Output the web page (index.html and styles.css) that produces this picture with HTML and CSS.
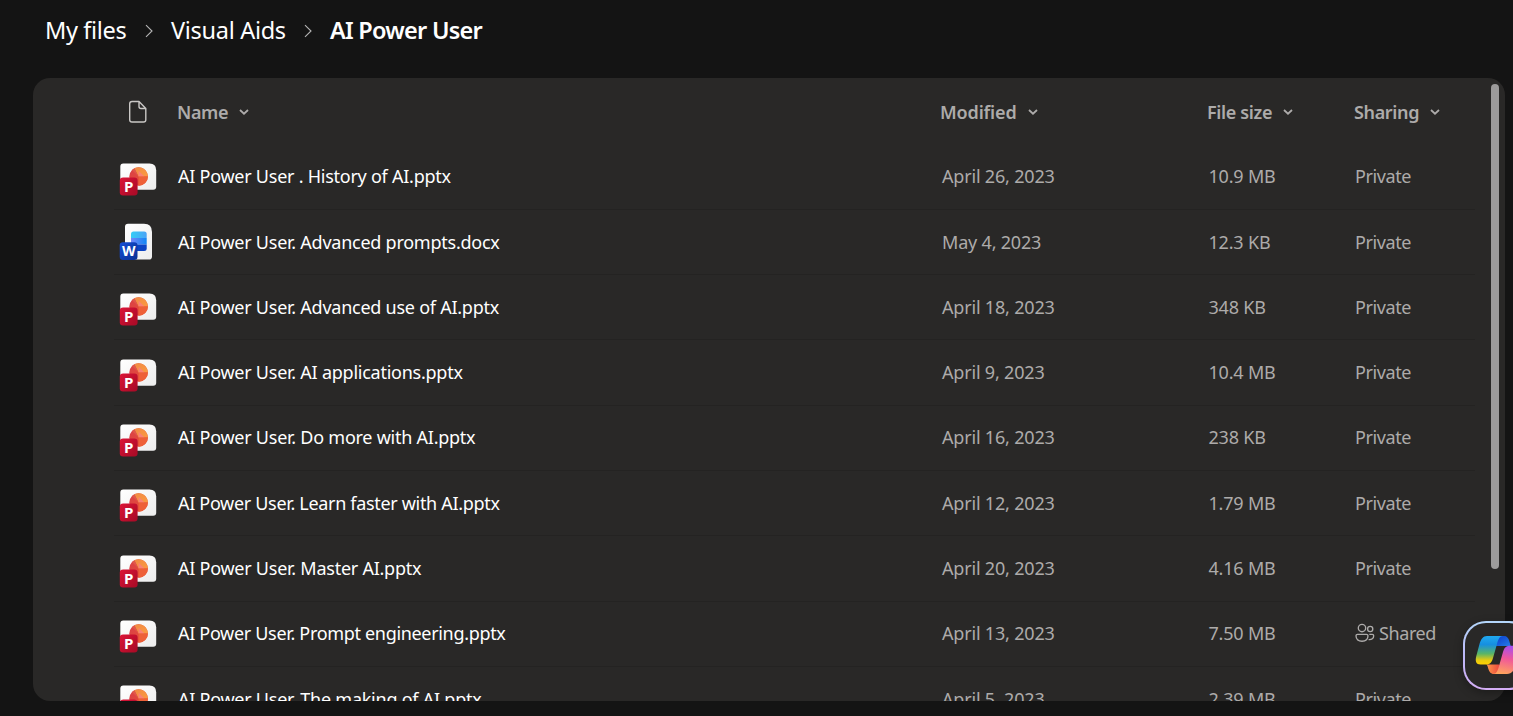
FILE: index.html
```html
<!DOCTYPE html>
<html lang="en">
<head>
<meta charset="utf-8">
<title>AI Power User</title>
<link rel="stylesheet" href="styles.css">
</head>
<body>
<svg class="defs" width="0" height="0" aria-hidden="true">
  <defs>
    <linearGradient id="paper" x1="0" y1="0" x2="1" y2="1"><stop offset="0" stop-color="#fff"/><stop offset="1" stop-color="#ededed"/></linearGradient>
    <linearGradient id="red" x1="0" y1="0" x2="1" y2="1"><stop offset="0" stop-color="#dc1437"/><stop offset="1" stop-color="#a50a25"/></linearGradient>
    <linearGradient id="pie" x1="0" y1="0" x2="1" y2="1"><stop offset="0" stop-color="#d9404a"/><stop offset="1" stop-color="#e8502f"/></linearGradient>
    <linearGradient id="pieTop" x1="0" y1="0" x2="1" y2="1"><stop offset="0" stop-color="#f08a45"/><stop offset="1" stop-color="#fb9a40"/></linearGradient>
    <linearGradient id="blue" x1="0" y1="0" x2="1" y2="1"><stop offset="0" stop-color="#1550d6"/><stop offset="1" stop-color="#0a2f93"/></linearGradient>
    <linearGradient id="w1"><stop offset="0" stop-color="#35cdf6"/><stop offset="1" stop-color="#4ba3f6"/></linearGradient>
    <linearGradient id="w2"><stop offset="0" stop-color="#7587f8"/><stop offset="1" stop-color="#0f86f5"/></linearGradient>
    <linearGradient id="cpA" x1="0" y1="0" x2="0" y2="1"><stop offset="0" stop-color="#20a9f0"/><stop offset=".3" stop-color="#168fe0"/><stop offset=".62" stop-color="#59b568"/><stop offset=".85" stop-color="#e8ca10"/><stop offset="1" stop-color="#ffd000"/></linearGradient>
    <linearGradient id="cpB" x1="0" y1="0" x2="1" y2="1"><stop offset="0" stop-color="#0b3ccd"/><stop offset="1" stop-color="#267de8"/></linearGradient>
    <linearGradient id="cpC" x1=".6" y1="0" x2=".4" y2="1"><stop offset="0" stop-color="#a64df0"/><stop offset=".45" stop-color="#f0579b"/><stop offset="1" stop-color="#ffa35d"/></linearGradient>
    <linearGradient id="cpD"><stop offset="0" stop-color="#ff9b4b"/><stop offset="1" stop-color="#e93f3c"/></linearGradient>
    <symbol id="ppt" viewBox="8 6.7 40 40">
      <path d="M13.3 13.2H39.5Q46.2 13.2 46.2 20V36.5Q46.2 39.5 43.2 39.5H13.3Q10.3 39.5 10.3 36.5V16.2Q10.3 13.2 13.3 13.2Z" fill="url(#paper)"/>
      <circle cx="28.6" cy="26.2" r="9.3" fill="url(#pie)"/>
      <path d="M28.6 26.2 24.2 18A9.3 9.3 0 0 1 37.9 26.2Z" fill="url(#pieTop)"/>
      <path d="M28.6 26.2 22 19.6A9.3 9.3 0 0 1 24.5 17.9Z" fill="#e0584a"/>
      <path d="M28.6 20.5 34.5 26.2H28.6Z" fill="#fa8177"/>
      <path d="M28.6 26.2H37.9A9.3 9.3 0 0 1 28.6 35.5Z" fill="#ee6038"/>
      <rect x="9.8" y="27.2" width="17.8" height="18" rx="3.3" fill="url(#red)"/>
      <text x="18.8" y="41.6" class="badge-letter">P</text>
    </symbol>
    <symbol id="doc" viewBox="8 7 40 40">
      <path d="M18 8.8H34Q42 8.8 42 17V41.5Q42 44.6 39 44.6H18Q15 44.6 15 41.5V11.8Q15 8.8 18 8.8Z" fill="url(#paper)"/>
      <path d="M23.5 16.5H34.2Q36.7 16.5 36.7 19V23H21V19Q21 16.5 23.5 16.5Z" fill="url(#w1)"/>
      <path d="M21 23H36.7V29.5H21Z" fill="url(#w2)"/>
      <path d="M21 29.5H36.7V33.5Q36.7 36 34 36H21Z" fill="#0b43c4"/>
      <rect x="9.7" y="27.2" width="17.8" height="17.8" rx="3.3" fill="url(#blue)"/>
      <text x="18.7" y="41.3" class="badge-letter wide">W</text>
    </symbol>
    <symbol id="down" viewBox="0 0 10 6"><path d="M1 1 5 4.7 9 1" fill="none" stroke="currentColor" stroke-width="1.8"/></symbol>
    <symbol id="next" viewBox="0 0 8 14"><path d="M1 1.2 7 7 1 12.8" fill="none" stroke="currentColor" stroke-width="1.1"/></symbol>
  </defs>
</svg>

<nav class="crumbs">
  <a class="c1">My files</a><svg class="next"><use href="#next"/></svg>
  <a class="c2">Visual Aids</a><svg class="next"><use href="#next"/></svg>
  <b class="c3">AI Power User</b>
</nav>

<main class="panel">
  <div class="row head">
    <svg class="file" viewBox="0 0 20 24"><path d="M4 1.5H11L17.8 8.5V19.7Q17.8 22 15.5 22H4Q1.7 22 1.7 19.7V3.8Q1.7 1.5 4 1.5ZM11 1.5V6.5Q11 8.5 13 8.5H17.8" fill="none" stroke="currentColor" stroke-width="1.4" stroke-linejoin="round"/></svg>
    <span>Name<svg class="down"><use href="#down"/></svg></span>
    <span class="modified">Modified<svg class="down"><use href="#down"/></svg></span>
    <span>File size<svg class="down"><use href="#down"/></svg></span>
    <span>Sharing<svg class="down"><use href="#down"/></svg></span>
  </div>
  <div class="row"><svg class="icon"><use href="#ppt"/></svg><span class="name">AI Power User . History of AI.pptx</span><span>April 26, 2023</span><span>10.9 MB</span><span class="access">Private</span></div>
  <div class="row"><svg class="icon"><use href="#doc"/></svg><span class="name">AI Power User. Advanced prompts.docx</span><span>May 4, 2023</span><span>12.3 KB</span><span class="access">Private</span></div>
  <div class="row"><svg class="icon"><use href="#ppt"/></svg><span class="name">AI Power User. Advanced use of AI.pptx</span><span>April 18, 2023</span><span>348 KB</span><span class="access">Private</span></div>
  <div class="row"><svg class="icon"><use href="#ppt"/></svg><span class="name">AI Power User. AI applications.pptx</span><span>April 9, 2023</span><span>10.4 MB</span><span class="access">Private</span></div>
  <div class="row"><svg class="icon"><use href="#ppt"/></svg><span class="name">AI Power User. Do more with AI.pptx</span><span>April 16, 2023</span><span>238 KB</span><span class="access">Private</span></div>
  <div class="row"><svg class="icon"><use href="#ppt"/></svg><span class="name tight">AI Power User. Learn faster with AI.pptx</span><span>April 12, 2023</span><span>1.79 MB</span><span class="access">Private</span></div>
  <div class="row"><svg class="icon"><use href="#ppt"/></svg><span class="name">AI Power User. Master AI.pptx</span><span>April 20, 2023</span><span>4.16 MB</span><span class="access">Private</span></div>
  <div class="row"><svg class="icon"><use href="#ppt"/></svg><span class="name tight">AI Power User. Prompt engineering.pptx</span><span>April 13, 2023</span><span>7.50 MB</span><span class="access shared"><svg class="people" viewBox="0 0 20 20"><g fill="none" stroke="currentColor" stroke-width="1.35"><circle cx="7" cy="5" r="3.7"/><circle cx="15.2" cy="6" r="2.6"/><path d="M2.5 11.3H11.5Q13 11.3 13 12.8C13 16.5 10.5 18.2 7 18.2S1 16.5 1 12.8Q1 11.3 2.5 11.3ZM14.3 11.3H17.2Q18.7 11.3 18.7 12.8C18.7 15.6 16.8 16.8 13.6 16.6"/></g></svg>Shared</span></div>
  <div class="row"><svg class="icon"><use href="#ppt"/></svg><span class="name">AI Power User. The making of AI.pptx</span><span>April 5, 2023</span><span>2.39 MB</span><span class="access">Private</span></div>
  <div class="scroll"></div>
</main>

<div class="copilot">
  <svg viewBox="0 0 44 40">
    <path d="M24 1H29C32 1 33.5 3 34.3 6L35.7 11H21V5Z" fill="url(#cpB)"/>
    <path d="M11 29.5H24L26 33 24 39H19C15.5 39 14.2 36.5 13.2 33.5 12.6 31 12 29.5 11 29.5Z" fill="url(#cpD)"/>
    <path d="M12 1H28C24.5 1 23.3 4.5 22 9L18 23C16.8 27 15.5 29.5 11 29.5H5.5C1 29.5 0 26 1.3 21L4.5 9C6 4 8 1 12 1Z" fill="url(#cpA)"/>
    <path d="M32 39H18C21.5 39 22.7 35.5 24 31L28 17C29.2 13 30.5 10.7 35 10.7H39.5C44 10.7 45 14 43.7 19L40.5 31C39 36 36 39 32 39Z" fill="url(#cpC)"/>
  </svg>
</div>
</body>
</html>
```
FILE: styles.css
```css
* { box-sizing: border-box; }
body {
  margin: 0;
  width: 1513px;
  height: 716px;
  overflow: hidden;
  position: relative;
  background: #141414;
  color: #fff;
  font-family: "Noto Sans", "Open Sans", sans-serif;
}
.defs { position: absolute; }
.crumbs {
  height: 78px;
  padding: 0 0 18px 45px;
  display: flex;
  align-items: center;
  font-size: 23.5px;
  white-space: nowrap;
}
.crumbs b { font-weight: 600; }
.c1 { width: 82px; letter-spacing: -0.35px; }
.c2 { width: 115px; letter-spacing: -0.3px; }
.c3 { letter-spacing: -0.75px; }
.next { width: 8px; height: 14px; margin: 1px 18px 0 18px; color: #b5b5b5; }
.panel {
  position: relative;
  width: 1472px;
  height: 623px;
  margin-left: 33px;
  padding: 0 30px 0 81px;
  border-radius: 17px;
  background: #292827;
  overflow: hidden;
}
.row {
  display: grid;
  grid-template-columns: 64px 764px 266.5px 146.5px 1fr;
  align-items: center;
  height: 65.3px;
  padding-bottom: 1px;
  border-bottom: 1px solid #242322;
  font-size: 18px;
  letter-spacing: -0.19px;
  color: #adabaa;
  white-space: nowrap;
}
.name { color: #fff; letter-spacing: -0.25px; }
.name.tight { letter-spacing: -0.32px; }
.access { letter-spacing: -0.4px; }
.head {
  height: 66.6px;
  border-bottom: 0;
  padding: 2px 0 0;
  font-weight: 600;
  letter-spacing: -0.35px;
  margin-left: -1px;
  grid-template-columns: 64px 763px 267px 147px 1fr;
}
.modified { letter-spacing: -0.15px; }
.file { width: 20px; height: 24px; margin-left: 15px; color: #c9c7c5; }
.down { width: 10px; height: 6px; margin-left: 11px; vertical-align: 4px; }
.icon { width: 40px; height: 40px; margin: 1px 0 0 4px; }
.badge-letter {
  font: 700 15px "Open Sans", "Noto Sans", sans-serif;
  letter-spacing: 0;
  text-anchor: middle;
  fill: #fff;
}
.badge-letter.wide { font-size: 14px; }
.shared { display: flex; align-items: center; gap: 4px; }
.people { width: 20px; height: 20px; }
.scroll {
  position: absolute;
  top: 6px;
  right: 6px;
  width: 8px;
  height: 485px;
  border-radius: 4px;
  background: #9c9b9b;
}
.copilot {
  position: absolute;
  left: 1463px;
  top: 621px;
  width: 69px;
  height: 69px;
  padding: 12px 10px;
  border: 2px solid transparent;
  border-radius: 23px;
  background: linear-gradient(#292827, #292827) padding-box, linear-gradient(#b4d7fb, #bdb8f8 50%, #d4adf5) border-box;
  box-shadow: 0 3px 10px rgba(0, 0, 0, .3);
}
.copilot svg { display: block; width: 44px; height: 40px; }
```
